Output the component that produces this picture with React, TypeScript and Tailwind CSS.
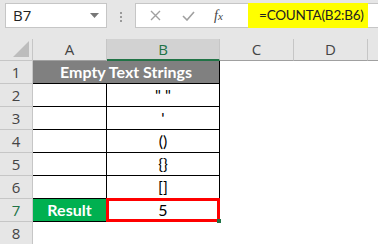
export default function App() {
  const rows = [
    { n: 2, b: '" "' },
    { n: 3, b: "'" },
    { n: 4, b: "()" },
    { n: 5, b: "{}" },
    { n: 6, b: "[]" },
  ];
  const hdr = "flex items-center justify-center border-r border-[#c6c6c6] text-[15px] text-[#444]";
  const rowHdr = "flex items-center justify-center border-b border-r border-[#c6c6c6] bg-[#e6e6e6] text-[15px] text-[#444]";
  const cell = "flex items-center justify-center border-b border-r border-black text-[15px] text-black";

  return (
    <div className="h-[244px] w-[378px] overflow-hidden bg-white font-['Open_Sans','Liberation_Sans',sans-serif]">
      {/* formula bar */}
      <div className="flex h-[39px] items-start bg-[#e6e6e6] pt-[3px]">
        <div className="ml-[5px] flex h-[25px] w-[102px] shrink-0 items-center justify-between border border-[#c6c6c6] bg-white pl-[7px] pr-[7px]">
          <span className="text-[15px] text-[#222]">B7</span>
          <svg width="9" height="5" viewBox="0 0 9 5"><path d="M0 0h9L4.5 5z" fill="#777" /></svg>
        </div>
        <div className="ml-[13px] mt-[9px] flex shrink-0 flex-col gap-[2px]">
          <span className="h-[2px] w-[2px] bg-[#9a9a9a]" />
          <span className="h-[2px] w-[2px] bg-[#9a9a9a]" />
          <span className="h-[2px] w-[2px] bg-[#9a9a9a]" />
        </div>
        <div className="ml-[13px] flex h-[25px] w-[113px] shrink-0 items-center border border-r-0 border-[#c6c6c6] bg-white">
          <svg className="ml-[14px]" width="11" height="11" viewBox="0 0 11 11">
            <path d="M1 1l9 9M10 1l-9 9" stroke="#a0a0a0" strokeWidth="1.4" />
          </svg>
          <svg className="ml-[21px]" width="13" height="10" viewBox="0 0 13 10">
            <path d="M1 5l4 4 7-8" stroke="#a0a0a0" strokeWidth="1.6" fill="none" />
          </svg>
          <span className="ml-[19px] font-['Liberation_Serif',serif] text-[14px] italic text-[#444]">
            f<span className="text-[11px]">x</span>
          </span>
        </div>
        <div className="flex h-[25px] w-[120px] shrink-0 items-center whitespace-nowrap bg-[#ffff00] pl-[11px] font-['Lato','Liberation_Sans',sans-serif] text-[13.5px] tracking-[-0.2px] text-[#222]">
          =COUNTA(B2:B6)
        </div>
        <div className="h-[25px] flex-1 border-y border-[#c6c6c6] bg-white" />
      </div>

      {/* sheet */}
      <div className="grid grid-cols-[33px_74px_113px_74px_74px_1fr] grid-rows-[22px_23px_23px_23px_23px_23px_23px_23px_23px]">
        {/* column headers */}
        <div className="flex items-end justify-end border-b border-r border-[#c6c6c6] bg-[#e6e6e6] pb-[3px] pr-[3px]">
          <svg width="16" height="16" viewBox="0 0 16 16"><path d="M16 0V16H0z" fill="#bdbdbd" /></svg>
        </div>
        <div className={`${hdr} border-b border-b-[#a0a0a0] bg-[#e6e6e6]`}>A</div>
        <div className={`${hdr} border-b-2 border-b-[#217346] bg-[#d2d2d2] text-[#217346]`}>B</div>
        <div className={`${hdr} border-b border-b-[#a0a0a0] bg-[#e6e6e6]`}>C</div>
        <div className={`${hdr} border-b border-b-[#a0a0a0] bg-[#e6e6e6]`}>D</div>
        <div className="border-b border-[#a0a0a0] bg-[#e6e6e6]" />

        {/* row 1 */}
        <div className={rowHdr}>1</div>
        <div className="col-span-2 flex items-center justify-center border-b border-r border-black bg-[#808080] font-['Lato','Liberation_Sans',sans-serif] text-[16px] font-bold text-white">
          Empty Text Strings
        </div>
        <div className="col-span-3" />

        {rows.map((r) => (
          <div key={r.n} className="contents">
            <div className={rowHdr}>{r.n}</div>
            <div className={cell} />
            <div className={`${cell} font-['Lato','Liberation_Sans',sans-serif] text-[16px]`}>{r.b}</div>
            <div className="col-span-3" />
          </div>
        ))}

        {/* row 7 */}
        <div className={`${rowHdr} bg-[#d2d2d2] text-[#217346]`}>7</div>
        <div className="flex items-center justify-center border-b border-r border-black bg-[#00b050] font-['Lato','Liberation_Sans',sans-serif] text-[16px] font-bold text-white">
          Result
        </div>
        <div className="relative -ml-px -mt-px flex items-center justify-center border-[3px] border-[#ff0000] font-['Lato','Liberation_Sans',sans-serif] text-[16px] text-black">
          5
          <span className="absolute -bottom-[4px] -right-[4px] h-[4px] w-[4px] bg-[#217346]" />
        </div>
        <div className="col-span-3" />

        {/* row 8 */}
        <div className={rowHdr}>8</div>
        <div className="col-span-5" />
      </div>
    </div>
  );
}
